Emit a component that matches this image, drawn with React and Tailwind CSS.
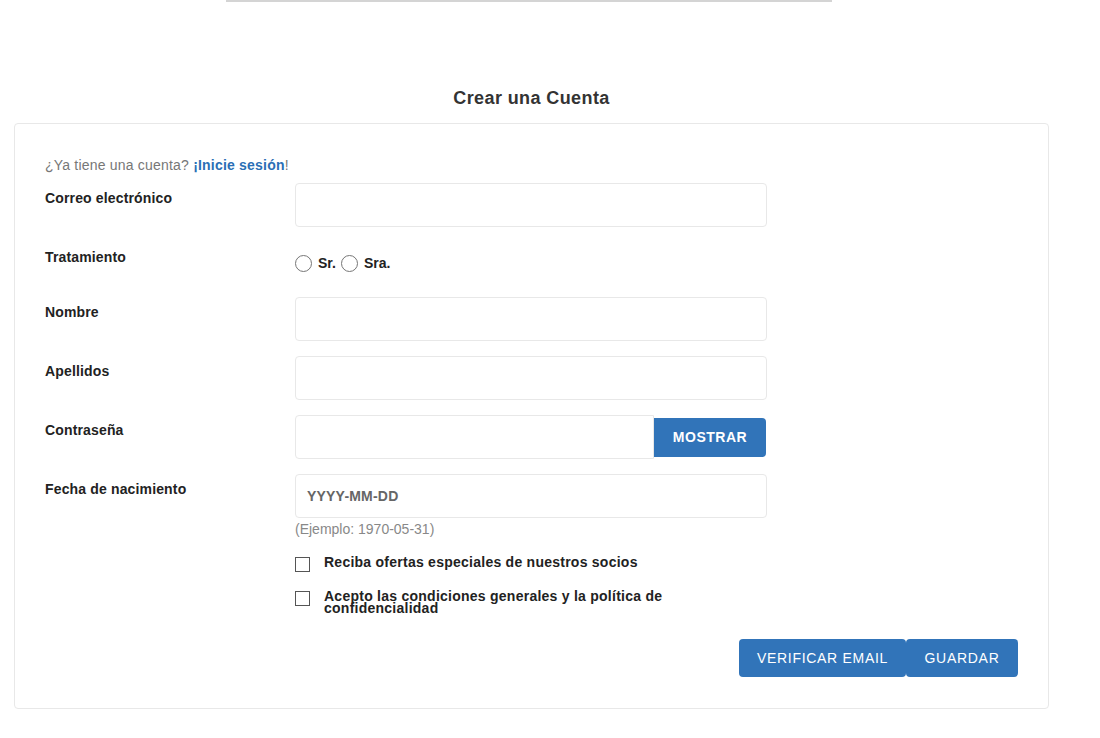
import React from 'react';

const Field = ({ label, children, className = '' }) => (
  <div className={`flex mb-[15px] ${className}`}>
    <div className="w-[250px] pt-[7px] text-[14px] leading-[16px] font-bold text-[#222] tracking-[0.15px]">{label}</div>
    <div>{children}</div>
  </div>
);

const TextBox = ({ placeholder }) => (
  <div className="w-[472px] h-[44px] border border-[#e8e8e8] rounded-[4px] flex items-center px-[11px] text-[14px] font-bold text-[#666] tracking-[0.2px]">
    {placeholder}
  </div>
);

const Radio = ({ label }) => (
  <label className="flex items-center gap-[6px]">
    <span className="w-[17px] h-[17px] rounded-full border border-[#767676] bg-white" />
    <span className="text-[14px] font-bold text-[#222]">{label}</span>
  </label>
);

const Check = ({ children }) => (
  <label className="flex items-start gap-[14px]">
    <span className="w-[15px] h-[15px] mt-[3px] border border-[#555] bg-white shrink-0" />
    <span className="text-[14px] leading-[12px] font-bold text-[#222] w-[370px] pt-[2px] tracking-[0.25px]">{children}</span>
  </label>
);

const App = () => {
  return (
    <div className="min-h-[738px] bg-white font-['Liberation_Sans',Arial,sans-serif]">
      <div className="ml-[226px] w-[606px] h-[2px] bg-[#d4d4d4]" />

      <h1 className="mt-[86px] ml-[14px] w-[1035px] text-center text-[18px] leading-[20px] font-bold text-[#333] tracking-[0.4px]">
        Crear una Cuenta
      </h1>

      <div className="mt-[15px] ml-[14px] w-[1035px] border border-[#e8e8e8] rounded-[4px] pl-[30px] pr-[30px] pt-[31px] pb-[31px]">
        <p className="text-[14px] leading-[20px] text-[#777] mb-[8px] tracking-[0.2px]">
          ¿Ya tiene una cuenta? <a className="font-bold text-[#2a6fb5]">¡Inicie sesión</a>!
        </p>

        <Field label="Correo electrónico">
          <TextBox />
        </Field>

        <Field label="Tratamiento" className="h-[40px]">
          <div className="flex items-center gap-[5px] pt-[11px]">
            <Radio label="Sr." />
            <Radio label="Sra." />
          </div>
        </Field>

        <Field label="Nombre">
          <TextBox />
        </Field>

        <Field label="Apellidos">
          <TextBox />
        </Field>

        <Field label="Contraseña">
          <div className="flex items-center w-[472px]">
            <div className="w-[359px] h-[44px] border border-[#e8e8e8] rounded-l-[4px]" />
            <button className="w-[112px] h-[39px] bg-[#3174b9] text-white text-[14px] font-bold rounded-r-[4px] tracking-[0.5px]">
              MOSTRAR
            </button>
          </div>
        </Field>

        <div className="flex">
          <div className="w-[250px] pt-[7px] text-[14px] leading-[16px] font-bold text-[#222] tracking-[0.15px]">Fecha de nacimiento</div>
          <div>
            <TextBox placeholder="YYYY-MM-DD" />
            <p className="mt-[3px] text-[14px] leading-[16px] text-[#888]">(Ejemplo: 1970-05-31)</p>
            <div className="mt-[17px] flex flex-col gap-[16px]">
              <Check>Reciba ofertas especiales de nuestros socios</Check>
              <Check>Acepto las condiciones generales y la política de confidencialidad</Check>
            </div>
          </div>
        </div>

        <div className="flex justify-end mt-[25px]">
          <button className="w-[167px] h-[38px] bg-[#3174b9] text-white text-[14px] rounded-[4px] tracking-[0.7px]">
            VERIFICAR EMAIL
          </button>
          <button className="w-[112px] h-[38px] bg-[#3174b9] text-white text-[14px] rounded-[4px] tracking-[0.7px]">
            GUARDAR
          </button>
        </div>
      </div>
    </div>
  );
};

export default App;
